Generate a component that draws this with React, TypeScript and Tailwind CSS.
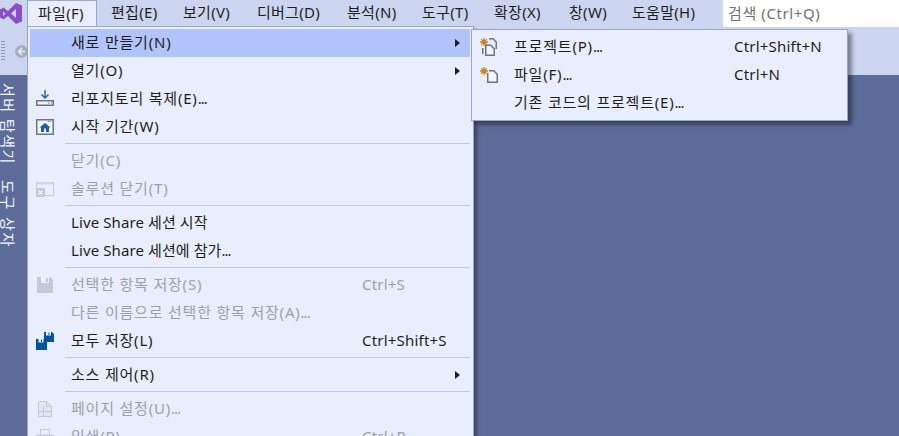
import React from 'react';

const FONT = 'font-["Noto_Sans","Noto_Sans_CJK_KR",sans-serif]';

const menus = [
    { label: '파일(F)', w: 'w-[70px]' },
    { label: '편집(E)', w: 'w-[72px]' },
    { label: '보기(V)', w: 'w-[74px]' },
    { label: '디버그(D)', w: 'w-[90px]' },
    { label: '분석(N)', w: 'w-[75px]' },
    { label: '도구(T)', w: 'w-[72px]' },
    { label: '확장(X)', w: 'w-[75px]' },
    { label: '창(W)', w: 'w-[63px]' },
    { label: '도움말(H)', w: 'w-[90px]' },
];

function CloneIcon() {
    return (
        <svg width="18" height="18" viewBox="0 0 18 18">
            <path d="M9 0v8M5.500 4.500 9 8l3.500-3.500" fill="none" stroke="#1f5fa8" strokeWidth="1.400" />
            <rect x="0.750" y="10.750" width="16.500" height="4.500" fill="#f3f5fb" stroke="#6f7380" strokeWidth="1.500" />
            <path d="M12 13h1.500M15 13h1" stroke="#6f7380" />
        </svg>
    );
}

function HomeIcon() {
    return (
        <svg width="18" height="16" viewBox="0 0 18 16">
            <rect x="0.750" y="0.750" width="16.500" height="14.500" fill="#f3f5fb" stroke="#6f7380" strokeWidth="1.500" />
            <path d="M3.500 8.500 9 4l5.500 4.500H13v4.500H5V8.500z" fill="#1f5fa8" />
            <rect x="8" y="9.500" width="2" height="3.500" fill="#f3f5fb" />
            <path d="M12 2.500h1M14 2.500h1" stroke="#6f7380" />
        </svg>
    );
}

function CloseSolutionIcon() {
    return (
        <svg width="18" height="16" viewBox="0 0 18 16">
            <path d="M0.500 7V1.500h17v13H9" fill="none" stroke="#c4c9d6" />
            <path d="M1 1h16v2.500H1z" fill="#d3d7e2" />
            <rect x="0" y="7" width="9" height="9" fill="#c4c9d6" />
            <path d="M2.500 9.500l4 4M6.500 9.500l-4 4" stroke="#f3f5fb" strokeWidth="1.200" />
        </svg>
    );
}

function SaveIcon() {
    return (
        <svg width="16" height="16" viewBox="0 0 16 16">
            <path d="M0 0h13l3 3v13H0z" fill="#c4c9d6" />
            <rect x="4" y="0" width="8" height="6" fill="#e9eefc" />
            <rect x="9" y="1" width="2" height="4" fill="#c4c9d6" />
        </svg>
    );
}

function SaveAllIcon() {
    return (
        <svg width="18" height="18" viewBox="0 0 18 18">
            <path d="M8 0h8l2 2v8H8z" fill="#00539c" />
            <rect x="10" y="0" width="5" height="3.500" fill="#e9eefc" />
            <rect x="12.500" y="0.500" width="1" height="2.500" fill="#00539c" />
            <rect x="7" y="6" width="1" height="12" fill="#e9eefc" />
            <path d="M0 7h9l2 2v9H0z" fill="#00539c" />
            <rect x="2.500" y="7" width="5" height="3.500" fill="#e9eefc" />
            <rect x="5" y="7.500" width="1" height="2.500" fill="#00539c" />
        </svg>
    );
}

function PageSetupIcon() {
    return (
        <svg width="14" height="16" viewBox="0 0 14 16">
            <path d="M0.500 0.500h8l5 5v10H0.500z" fill="#e2e6f2" stroke="#c4c9d6" />
            <path d="M8.500 0.500v5h5M0.500 10.500h13M5.500 5.500v10" fill="none" stroke="#c4c9d6" />
        </svg>
    );
}

function PrintIcon() {
    return (
        <svg width="18" height="16" viewBox="0 0 18 16">
            <path d="M4.500 5V0.500h9V5" fill="#e9eefc" stroke="#c4c9d6" />
            <path d="M0.500 5.500h17v7h-3V9.500h-11v3h-3z" fill="#c4c9d6" />
        </svg>
    );
}

function Star({ y }: { y: number }) {
    return (
        <g transform={`translate(0 ${y})`} stroke="#c8841c" strokeWidth="1.300">
            <path d="M4 0v8M0 4h8M1.200 1.200l5.600 5.600M6.800 1.200l-5.600 5.600" />
        </g>
    );
}

function NewProjectIcon() {
    return (
        <svg width="18" height="20" viewBox="0 0 18 20">
            <path d="M9 2.750h4l3.250 3.250v7M2.750 12v6" fill="none" stroke="#6f7380" strokeWidth="1.500" />
            <path d="M5.750 19.250v-10h5l3.500 3.500v6.500z" fill="#f3f5fb" stroke="#6f7380" strokeWidth="1.500" />
            <Star y={2} />
        </svg>
    );
}

function NewFileIcon() {
    return (
        <svg width="18" height="18" viewBox="0 0 18 18">
            <path d="M7.750 8v9.250h9.500v-8l-3.500-3.500H9" fill="#f3f5fb" stroke="#6f7380" strokeWidth="1.500" />
            <Star y={2} />
        </svg>
    );
}

// the trailing dots sit tight in the reference font
function Label({ text, tracking }: { text: string; tracking: string }) {
    const dots = text.endsWith('...');
    return (
        <span className={`whitespace-nowrap ${tracking}`}>
            {dots ? text.slice(0, -3) : text}
            {dots && <span className="tracking-[-1px]">...</span>}
        </span>
    );
}

type Row = {
    label?: string;
    sep?: boolean;
    disabled?: boolean;
    active?: boolean;
    arrow?: boolean;
    latin?: boolean;
    shortcut?: string;
    icon?: React.ReactNode;
};

const rows: Row[] = [
    { label: '새로 만들기(N)', active: true, arrow: true },
    { label: '열기(O)', arrow: true },
    { label: '리포지토리 복제(E)...', icon: <CloneIcon /> },
    { label: '시작 기간(W)', icon: <HomeIcon /> },
    { sep: true },
    { label: '닫기(C)', disabled: true },
    { label: '솔루션 닫기(T)', disabled: true, icon: <CloseSolutionIcon /> },
    { sep: true },
    { label: 'Live Share 세션 시작', latin: true },
    { label: 'Live Share 세션에 참가...', latin: true },
    { sep: true },
    { label: '선택한 항목 저장(S)', disabled: true, shortcut: 'Ctrl+S', icon: <SaveIcon /> },
    { label: '다른 이름으로 선택한 항목 저장(A)...', disabled: true },
    { label: '모두 저장(L)', shortcut: 'Ctrl+Shift+S', icon: <SaveAllIcon /> },
    { sep: true },
    { label: '소스 제어(R)', arrow: true },
    { sep: true },
    { label: '페이지 설정(U)...', disabled: true, icon: <PageSetupIcon /> },
    { label: '인쇄(P)...', disabled: true, shortcut: 'Ctrl+P', icon: <PrintIcon /> },
];

export default function App() {
    return (
        <div className={`relative w-[899px] h-[436px] overflow-hidden flex flex-col bg-[#5d6b99] text-[15px] text-[#1e1e1e] ${FONT}`}>
            {/* Title / menu bar */}
            <div className="h-[27px] shrink-0 flex bg-[#ccd5f0]">
                <div className="w-[27px] shrink-0 flex items-start pt-[2px]">
                    <svg width="23" height="23" viewBox="0 0 23 23">
                        <path d="M16 1 8 9 3.500 5.500 0 7.500v8l3.500 2L8 14l8 8 6-2.500v-16zM16 7v9l-5-4.500zM3 9.500l2.500 2L3 14z" fill="#8a4fc8" />
                    </svg>
                </div>
                <div className="flex">
                    {menus.map((m, i) => (
                        <div key={m.label} className={`${m.w} h-[27px] flex items-center pb-[2px] tracking-[0.3px] whitespace-nowrap ${i === 0 ? 'pl-[10px] bg-[#e9eefc] border-x border-t border-[#9ba7c9]' : 'pl-[14px]'}`}>
                            {m.label}
                        </div>
                    ))}
                </div>
                <div className="ml-auto w-[176px] h-[27px] bg-white text-[#717171] pl-[5px] pb-[1px] tracking-[0.6px] flex items-center">검색 (Ctrl+Q)</div>
            </div>

            {/* Toolbar */}
            <div className="h-[48px] shrink-0 flex items-center bg-[#ccd5f0]">
                <div className="ml-[1px] w-[4px] h-[22px] bg-[radial-gradient(#8f98ad_0.7px,transparent_0.8px)] bg-[length:2px_3px]" />
                <svg className="ml-[10px]" width="13" height="13" viewBox="0 0 13 13">
                    <circle cx="6.500" cy="6.500" r="6.500" fill="#a9aebb" />
                    <path d="M7 3 3.500 6.500 7 10M4 6.500h6" fill="none" stroke="#e9eefc" strokeWidth="1.500" />
                </svg>
            </div>

            {/* Work area */}
            <div className="flex-1 min-h-0 flex">
                <div className="w-[27px] shrink-0 pt-[8px] flex flex-col items-start gap-[15px] text-[#f4f6fd] text-[15px]">
                    <div className="[writing-mode:vertical-rl] [text-orientation:sideways] leading-[16px] tracking-[1.500px] whitespace-nowrap">서버 탐색기</div>
                    <div className="[writing-mode:vertical-rl] [text-orientation:sideways] leading-[16px] tracking-[1.800px] whitespace-nowrap">도구 상자</div>
                </div>
                <div className="flex-1" />
            </div>

            {/* File menu */}
            <div className="absolute left-[27px] top-[26px] w-[447px] h-[430px] bg-[#e9eefc] border border-[#9ba7c9] pt-[2px] pl-[2px] pr-[3px] shadow-[3px_3px_3px_rgba(0,0,0,0.35)]">
                {rows.map((r, i) =>
                    r.sep ? (
                        <div key={i} className="h-[6px] pl-[35px] pt-[2px]">
                            <div className="h-[1px] bg-[#bcc6e6]" />
                        </div>
                    ) : (
                        <div key={i} className={`relative h-[28px] flex items-center pb-[2px] ${r.active ? 'bg-[#b1c4fb]' : ''} ${r.disabled ? 'text-[#9a9fae]' : ''}`}>
                            <div className="w-[41px] shrink-0 flex justify-center pr-[11px] pt-[2px]">{r.icon}</div>
                            <Label text={r.label ?? ''} tracking={r.latin ? 'tracking-[0.1px]' : 'tracking-[0.8px]'} />
                            {r.shortcut && <span className="absolute left-[332px] tracking-[0.2px]">{r.shortcut}</span>}
                            {r.arrow && <span className="absolute left-[425px] top-[10px] w-0 h-0 border-y-[4px] border-y-transparent border-l-[5px] border-l-[#1e1e1e]" />}
                        </div>
                    )
                )}
            </div>

            {/* New submenu */}
            <div className="absolute left-[471px] top-[29px] w-[377px] h-[92px] bg-[#e9eefc] border border-[#9ba7c9] pt-[3px] shadow-[4px_4px_4px_rgba(0,0,0,0.4)]">
                <div className="relative h-[28px] flex items-center pb-[2px]">
                    <div className="w-[42px] shrink-0 pl-[8px]"><NewProjectIcon /></div>
                    <Label text="프로젝트(P)..." tracking="tracking-[0.8px]" />
                    <span className="absolute left-[262px] tracking-[0.2px]">Ctrl+Shift+N</span>
                </div>
                <div className="relative h-[28px] flex items-center pb-[2px]">
                    <div className="w-[42px] shrink-0 pl-[8px]"><NewFileIcon /></div>
                    <Label text="파일(F)..." tracking="tracking-[0.8px]" />
                    <span className="absolute left-[262px] tracking-[0.2px]">Ctrl+N</span>
                </div>
                <div className="h-[28px] flex items-center pl-[42px] pb-[2px]">
                    <Label text="기존 코드의 프로젝트(E)..." tracking="tracking-[0.8px]" />
                </div>
            </div>
        </div>
    );
}
